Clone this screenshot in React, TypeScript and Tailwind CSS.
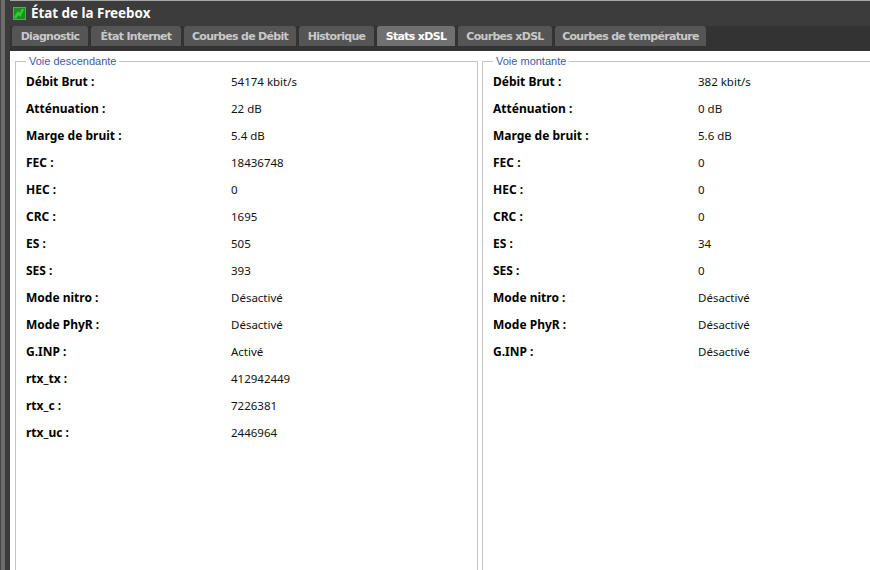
const tabs = [
  { name: 'Diagnostic', width: 'w-[76px]' },
  { name: 'État Internet', width: 'w-[90px]' },
  { name: 'Courbes de Débit', width: 'w-[112px]' },
  { name: 'Historique', width: 'w-[75px]' },
  { name: 'Stats xDSL', width: 'w-[78px]' },
  { name: 'Courbes xDSL', width: 'w-[94px]' },
  { name: 'Courbes de température', width: 'w-[151px]' },
];

const down: [string, string][] = [
  ['Débit Brut :', '54174 kbit/s'],
  ['Atténuation :', '22 dB'],
  ['Marge de bruit :', '5.4 dB'],
  ['FEC :', '18436748'],
  ['HEC :', '0'],
  ['CRC :', '1695'],
  ['ES :', '505'],
  ['SES :', '393'],
  ['Mode nitro :', 'Désactivé'],
  ['Mode PhyR :', 'Désactivé'],
  ['G.INP :', 'Activé'],
  ['rtx_tx :', '412942449'],
  ['rtx_c :', '7226381'],
  ['rtx_uc :', '2446964'],
];

const up: [string, string][] = [
  ['Débit Brut :', '382 kbit/s'],
  ['Atténuation :', '0 dB'],
  ['Marge de bruit :', '5.6 dB'],
  ['FEC :', '0'],
  ['HEC :', '0'],
  ['CRC :', '0'],
  ['ES :', '34'],
  ['SES :', '0'],
  ['Mode nitro :', 'Désactivé'],
  ['Mode PhyR :', 'Désactivé'],
  ['G.INP :', 'Désactivé'],
];

const Panel = ({ title, rows }: { title: string; rows: [string, string][] }) => (
  <fieldset className="border border-[#c4c4c4] min-w-0 w-[463px] h-[540px] pl-[10px] shrink-0">
    <legend className="px-[3px] text-[11px] leading-[12px] text-[#3f5a9e] font-['Liberation_Sans',sans-serif]">{title}</legend>
    <div className="pt-[1px]">
      {rows.map(([label, value]) => (
        <div key={label} className="flex h-[27px] items-center">
          <div className="w-[205px] shrink-0 font-bold text-[12px] text-black">{label}</div>
          <div className="text-[11.5px] text-[#111]">{value}</div>
        </div>
      ))}
    </div>
  </fieldset>
);

export default function App() {
  return (
    <div className="w-[870px] h-[570px] overflow-hidden flex bg-white font-['Noto_Sans','Liberation_Sans',sans-serif]">
      <div className="w-[10px] shrink-0 flex">
        <div className="w-[1px] bg-[#444]" />
        <div className="w-[4px] bg-[#6c6c6c]" />
        <div className="w-[5px] bg-[#3c3c3c]" />
      </div>
      <div className="flex-1 min-w-0 flex flex-col">
        <div className="h-[1px] shrink-0 bg-[#a8a8a8]" />
        <div className="h-[25px] shrink-0 bg-[#3c3c3c] flex items-center pl-[3px] gap-[5px]">
          <svg width="13" height="13" viewBox="0 0 13 13">
            <rect width="13" height="13" fill="#6f9a6f" />
            <rect x="1" y="1" width="11" height="11" fill="#17901c" />
            <path d="M2 11 L5 6 L7 8 L10 2" stroke="#2ccf32" strokeWidth="2.5" fill="none" />
          </svg>
          <span className="font-bold text-[13.4px] text-white">État de la Freebox</span>
        </div>
        <div className="h-[25px] shrink-0 bg-[#333] flex gap-[3px] pl-[2px]">
          {tabs.map((t) => (
            <div
              key={t.name}
              className={`h-[20px] ${t.width} pt-[2px] rounded-t-[3px] flex items-center justify-center font-bold text-[11px] font-['DejaVu_Sans',sans-serif] tracking-[-0.7px] ${
                t.name === 'Stats xDSL' ? 'bg-[#707070] text-white' : 'bg-[#555] text-[#c8c8c8]'
              }`}
            >
              {t.name}
            </div>
          ))}
        </div>
        <div className="flex pt-[4px] gap-[4px] pl-[5px]">
          <Panel title="Voie descendante" rows={down} />
          <Panel title="Voie montante" rows={up} />
        </div>
      </div>
    </div>
  );
}
